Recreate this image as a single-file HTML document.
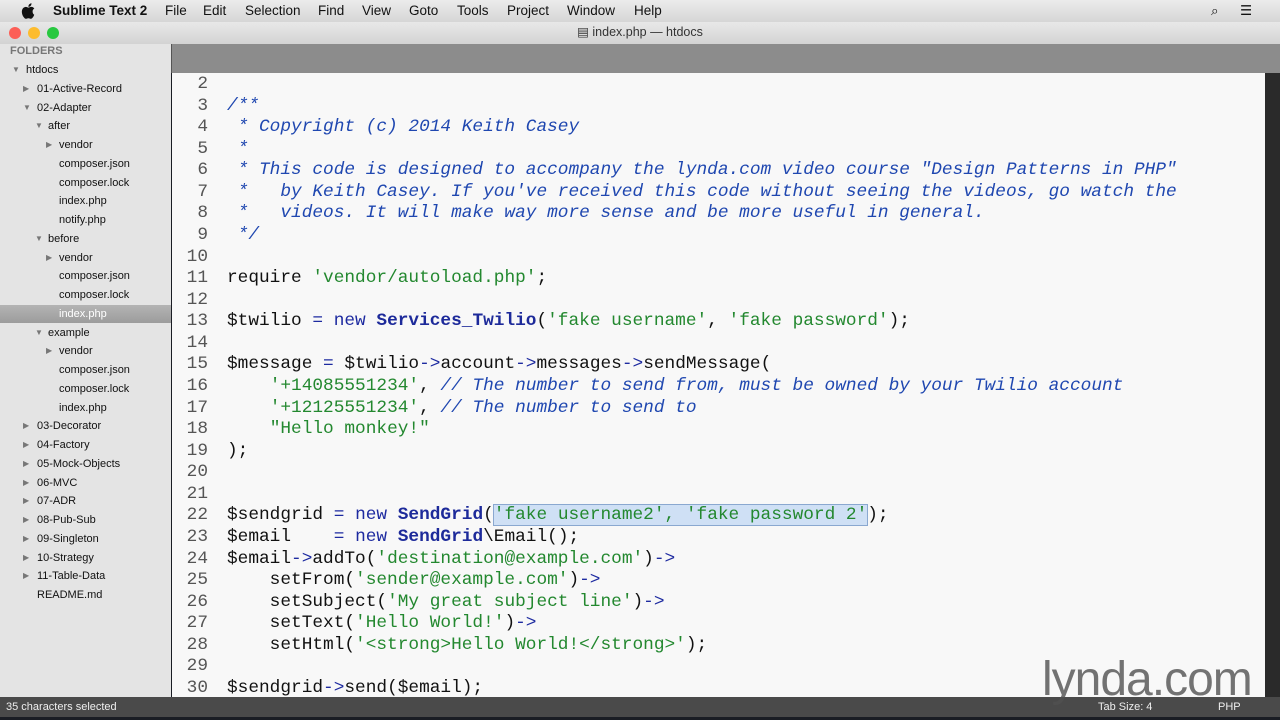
<!DOCTYPE html>
<html><head><meta charset="utf-8"><style>
*{margin:0;padding:0;box-sizing:border-box}
body{width:1280px;height:720px;overflow:hidden;background:#1a1d24;font-family:"Liberation Sans",sans-serif;position:relative}
#menu{position:absolute;left:0;top:0;width:1280px;height:22px;background:linear-gradient(#ececec,#d6d6d6);font-size:13.5px;color:#111}
#menu span{position:absolute;top:3px}
#title{position:absolute;left:0;top:22px;width:1280px;height:22px;background:linear-gradient(#e8e8e8,#d3d3d3);font-size:12.5px;color:#333;text-align:center;line-height:21px}
.dot{position:absolute;top:27px;width:12px;height:12px;border-radius:50%}
#side{position:absolute;left:0;top:44px;width:171px;height:653px;background:#e4e4e4;font-size:11px;color:#111}
#side div{position:absolute;height:18px;line-height:18px;white-space:nowrap}
.ar{font-size:8px;color:#777;position:absolute}
#tabs{position:absolute;left:171px;top:44px;width:1109px;height:29px;background:#8c8c8c;border-left:1px solid #555}
#ed{position:absolute;left:172px;top:73px;width:1093px;height:624px;background:#f8f8f8;overflow:hidden}
#scroll{position:absolute;left:1265px;top:73px;width:15px;height:624px;background:#2a2a2a}
.ln{position:absolute;left:0;width:36px;text-align:right;font:17.8px "Liberation Mono",monospace;color:#555}
.cd{position:absolute;left:55px;font:17.8px "Liberation Mono",monospace;color:#111;white-space:pre}
.c{color:#1f47b0;font-style:italic}
.s{color:#23882f}
.k{color:#1d2aa0}
.b{color:#1d2a9a;font-weight:bold}
#status{position:absolute;left:0;top:697px;width:1280px;height:20px;background:#4a4a4a;color:#eee;font-size:11px}
#status span{position:absolute;top:4px}
</style></head><body>
<div id="menu">
<svg style="position:absolute;left:21px;top:3px" width="14" height="16" viewBox="0 0 14 16"><path d="M11.6 8.5c0-2 1.6-2.9 1.7-3-1-1.4-2.4-1.6-2.9-1.6-1.2-.1-2.4.7-3 .7s-1.6-.7-2.6-.7C3.4 4 2.2 4.8 1.5 6 .1 8.4 1.2 12 2.5 13.9c.7.9 1.4 2 2.4 1.9 1 0 1.3-.6 2.5-.6s1.5.6 2.5.6 1.7-1 2.3-1.9c.7-1.1 1-2.1 1-2.2 0 0-1.6-.7-1.6-3.2zM9.7 2.7c.5-.7.9-1.6.8-2.5-.8 0-1.7.5-2.3 1.2-.5.6-.9 1.5-.8 2.4.9.1 1.8-.4 2.3-1.1z" fill="#111"/></svg>
<span style="left:53px;font-weight:bold">Sublime Text 2</span>
<span style="left:165px">File</span><span style="left:203px">Edit</span><span style="left:245px">Selection</span><span style="left:318px">Find</span><span style="left:362px">View</span><span style="left:409px">Goto</span><span style="left:457px">Tools</span><span style="left:507px">Project</span><span style="left:567px">Window</span><span style="left:634px">Help</span>
<span style="left:1211px">⌕</span><span style="left:1240px">☰</span>
</div>
<div id="title">▤ index.php — htdocs</div>
<div class="dot" style="left:9px;background:#fc5f57"></div>
<div class="dot" style="left:28px;background:#fdbc2e"></div>
<div class="dot" style="left:47px;background:#28c840"></div>
<div id="side">
<div style="left:10px;top:-2px;font-weight:bold;color:#777;font-size:11px">FOLDERS</div>
<div style="left:0;top:261px;width:171px;background:linear-gradient(#b4b4b4,#9c9c9c)"></div>
</div>
<div id="tabs"></div>
<div id="ed"></div>
<div id="scroll"></div>
<div id="status"><span style="left:6px">35 characters selected</span><span style="left:1098px">Tab Size: 4</span><span style="left:1218px">PHP</span></div>
<div style="position:absolute;left:1042px;top:652px;font:48px 'Liberation Sans',sans-serif;color:rgba(80,80,80,.8);letter-spacing:-1px">lynda.com</div>
<script>
var items=[[0,'htdocs',1],[1,'01-Active-Record',0],[1,'02-Adapter',1],[2,'after',1],[3,'vendor',0],[3,'composer.json'],[3,'composer.lock'],[3,'index.php'],[3,'notify.php'],[2,'before',1],[3,'vendor',0],[3,'composer.json'],[3,'composer.lock'],[3,'index.php'],[2,'example',1],[3,'vendor',0],[3,'composer.json'],[3,'composer.lock'],[3,'index.php'],[1,'03-Decorator',0],[1,'04-Factory',0],[1,'05-Mock-Objects',0],[1,'06-MVC',0],[1,'07-ADR',0],[1,'08-Pub-Sub',0],[1,'09-Singleton',0],[1,'10-Strategy',0],[1,'11-Table-Data',0],[1,'README.md']];
var tx=[26,37,48,59],ax=[12,23,35,46],s=document.getElementById('side'),h='';
items.forEach(function(it,i){var y=17+i*18.75;var col=(i==13)?'#fff':'#111';
if(it[2]!==undefined)h+='<div class="ar" style="left:'+ax[it[0]]+'px;top:'+y+'px">'+(it[2]?'▼':'▶')+'</div>';
h+='<div style="left:'+tx[it[0]]+'px;top:'+y+'px;color:'+col+'">'+it[1]+'</div>';});
s.innerHTML+=h;
var L={2:'',3:'<span class="c">/**</span>',4:'<span class="c"> * Copyright (c) 2014 Keith Casey</span>',5:'<span class="c"> *</span>',
6:'<span class="c"> * This code is designed to accompany the lynda.com video course "Design Patterns in PHP"</span>',
7:'<span class="c"> *   by Keith Casey. If you\'ve received this code without seeing the videos, go watch the</span>',
8:'<span class="c"> *   videos. It will make way more sense and be more useful in general.</span>',9:'<span class="c"> */</span>',10:'',
11:'require <span class="s">\'vendor/autoload.php\'</span>;',12:'',
13:'$twilio <span class="k">=</span> <span class="k">new</span> <span class="b">Services_Twilio</span>(<span class="s">\'fake username\'</span>, <span class="s">\'fake password\'</span>);',14:'',
15:'$message <span class="k">=</span> $twilio<span class="k">-></span>account<span class="k">-></span>messages<span class="k">-></span>sendMessage(',
16:'    <span class="s">\'+14085551234\'</span>, <span class="c">// The number to send from, must be owned by your Twilio account</span>',
17:'    <span class="s">\'+12125551234\'</span>, <span class="c">// The number to send to</span>',
18:'    <span class="s">"Hello monkey!"</span>',19:');',20:'',21:'',
22:'$sendgrid <span class="k">=</span> <span class="k">new</span> <span class="b">SendGrid</span>(<span class="s" style="background:#cfe0f5;outline:1px solid #8aa8d0">\'fake username2\', \'fake password 2\'</span>);',
23:'$email    <span class="k">=</span> <span class="k">new</span> <span class="b">SendGrid</span>\\Email();',
24:'$email<span class="k">-></span>addTo(<span class="s">\'destination@example.com\'</span>)<span class="k">-></span>',
25:'    setFrom(<span class="s">\'sender@example.com\'</span>)<span class="k">-></span>',
26:'    setSubject(<span class="s">\'My great subject line\'</span>)<span class="k">-></span>',
27:'    setText(<span class="s">\'Hello World!\'</span>)<span class="k">-></span>',
28:'    setHtml(<span class="s">\'&lt;strong&gt;Hello World!&lt;/strong&gt;\'</span>);',29:'',
30:'$sendgrid<span class="k">-></span>send($email);'};
var e=document.getElementById('ed'),o='';
for(var n=2;n<=30;n++){var y=(n-2)*21.57+1;o+='<div class="ln" style="top:'+y+'px">'+n+'</div><div class="cd" style="top:'+y+'px">'+L[n]+'</div>';}
e.innerHTML=o;
</script>
</body></html>
